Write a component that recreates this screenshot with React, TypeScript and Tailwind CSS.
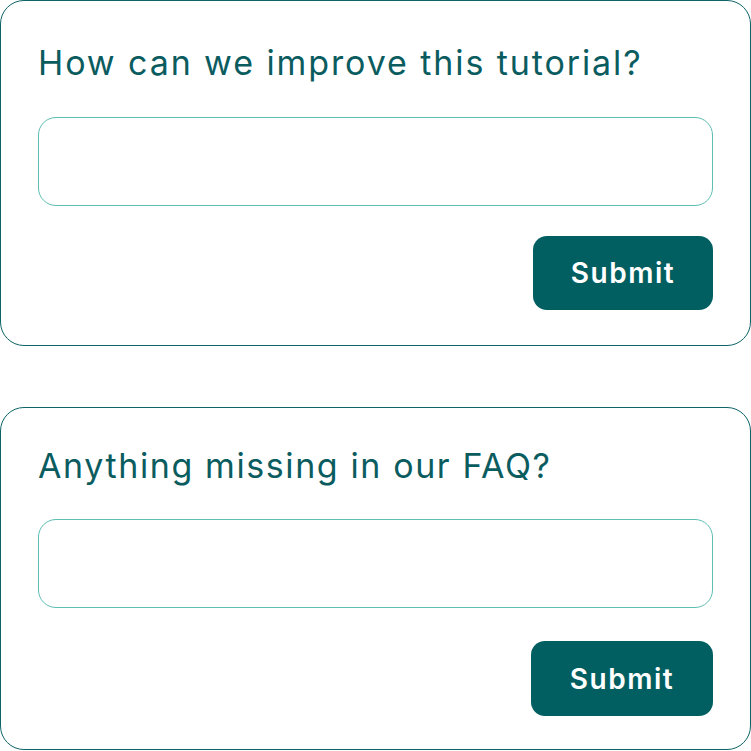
export default function App() {
  const font = { fontFamily: 'Inter, "Open Sans", sans-serif' };
  return (
    <div className="w-[751px] h-[751px] bg-white flex flex-col" style={font}>
      <div className="h-[346px] border border-[#0d6466] rounded-[24px] px-[37px] pt-[42px] flex flex-col">
        <h2 className="text-[34px] leading-[40px] text-[#0b5c5f] tracking-[1.9px]">How can we improve this tutorial?</h2>
        <div className="mt-[34px] h-[89px] rounded-[18px] border border-[#5dbdb2]" />
        <div className="mt-[30px] flex justify-end">
          <button className="w-[180px] h-[74px] rounded-[14px] bg-[#025f61] text-white text-[28px] font-semibold tracking-[1.5px]">Submit</button>
        </div>
      </div>
      <div className="mt-[61px] h-[343px] border border-[#0d6466] rounded-[24px] px-[37px] pt-[38px] flex flex-col">
        <h2 className="text-[34px] leading-[40px] text-[#0b5c5f] tracking-[1.6px]">Anything missing in our FAQ?</h2>
        <div className="mt-[33px] h-[89px] rounded-[18px] border border-[#5dbdb2]" />
        <div className="mt-[33px] flex justify-end">
          <button className="w-[182px] h-[75px] rounded-[14px] bg-[#025f61] text-white text-[28px] font-semibold tracking-[1.5px]">Submit</button>
        </div>
      </div>
    </div>
  );
}
